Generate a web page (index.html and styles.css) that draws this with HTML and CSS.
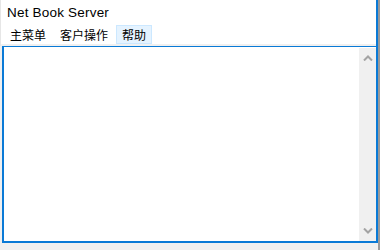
FILE: index.html
```html
<!DOCTYPE html>
<html>
<head>
<meta charset="utf-8">
<link rel="stylesheet" href="styles.css">
</head>
<body>
<div class="app">
  <div class="top">
    <div class="title">Net Book Server</div>
    <div class="menubar">
      <span class="menu-item">主菜单</span>
      <span class="menu-item">客户操作</span>
      <span class="menu-item active">帮助</span>
    </div>
    <div class="menu-rule"></div>
  </div>
  <div class="editor">
    <div class="text"></div>
    <div class="scrollbar">
      <svg class="arrow" width="10" height="6" viewBox="0 0 10 6"><path d="M1 5.5 L5 1.5 L9 5.5" fill="none" stroke="#a3a3a3" stroke-width="2"/></svg>
      <svg class="arrow" width="10" height="6" viewBox="0 0 10 6"><path d="M1 0.5 L5 4.5 L9 0.5" fill="none" stroke="#a3a3a3" stroke-width="2"/></svg>
    </div>
  </div>
</div>
</body>
</html>
```
FILE: styles.css
```css
html, body {
  margin: 0;
  padding: 0;
}
body {
  width: 380px;
  height: 250px;
  overflow: hidden;
  background: #f0f0f0;
}
.app {
  width: 380px;
  height: 250px;
  display: flex;
  flex-direction: column;
  background: #f0f0f0;
  border-right: 2px solid #9a9a9a;
  box-sizing: border-box;
}
.top {
  width: 378px;
  height: 46px;
  flex: none;
  box-sizing: border-box;
  background: #ffffff;
  border-left: 1px solid #e6e6e6;
  border-right: 2px solid #0a7ad6;
  display: flex;
  flex-direction: column;
}
.title {
  font-family: "Liberation Sans", Arial, sans-serif;
  font-size: 13.5px;
  letter-spacing: 0.2px;
  color: #000;
  padding: 5px 0 0 6px;
  height: 25px;
  box-sizing: border-box;
  line-height: 15px;
}
.menubar {
  display: flex;
  padding: 0 0 0 2px;
  height: 19px;
}
.menu-item {
  font-family: "Noto Sans CJK SC", "Microsoft YaHei", sans-serif;
  font-size: 12px;
  line-height: 17px;
  color: #000;
  padding: 0 6px;
  border: 1px solid transparent;
}
.menu-item.active {
  background: #e5f3ff;
  border-color: #cce8ff;
  padding: 0 5px;
  margin-left: 1px;
}
.menu-rule {
  flex: 1;
  background: #f0f0f0;
}
.editor {
  margin-left: 2px;
  width: 376px;
  height: 197px;
  flex: none;
  box-sizing: border-box;
  border: 2px solid #0a7ad6;
  border-top-width: 1px;
  background: #ffffff;
  display: flex;
}
.text {
  flex: 1;
}
.scrollbar {
  width: 17px;
  background: #f0f0f0;
  display: flex;
  flex-direction: column;
  justify-content: space-between;
  align-items: center;
  margin-top: 1px;
  padding: 7px 0 7px;
}
.arrow {
  display: block;
}
```
